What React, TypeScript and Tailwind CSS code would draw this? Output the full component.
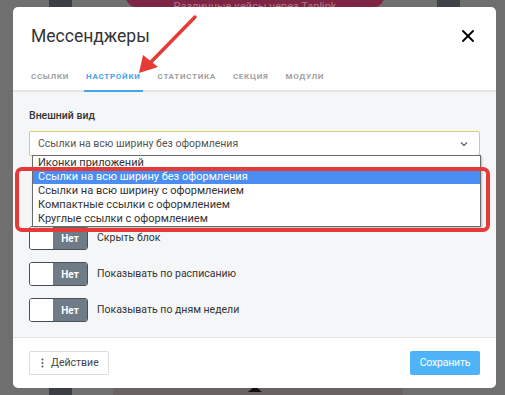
import { X } from 'lucide-react';

const options = [
  'Иконки приложений',
  'Ссылки на всю ширину без оформления',
  'Ссылки на всю ширину с оформлением',
  'Компактные ссылки с оформлением',
  'Круглые ссылки с оформлением',
];

const tabs = ['Ссылки', 'Настройки', 'Статистика', 'Секция', 'Модули'];

function Toggle({ label }: { label: string }) {
  return (
    <div className="flex items-center gap-[9px] h-[24px]">
      <div className="flex w-[59px] h-[24px] border border-[#4a4f55] rounded-[3px] overflow-hidden">
        <div className="w-[23px] bg-white" />
        <div className="flex-1 bg-[#6f7c88] flex items-center justify-center text-white text-[10px] font-bold">Нет</div>
      </div>
      <span className="text-[10.5px] text-[#333]">{label}</span>
    </div>
  );
}

export default function App() {
  return (
    <div className="relative w-[505px] h-[395px] overflow-hidden bg-[#6f6f6f] font-['Roboto','Liberation_Sans',sans-serif]">
      {/* page behind the overlay */}
      <div className="absolute left-[49px] top-0 w-[23px] h-[8px] bg-[#3b3f44]" />
      <div className="absolute left-[125px] top-[-20px] w-[260px] h-[28px] rounded-[14px] bg-[#7e2444] flex items-end justify-center text-[11px] text-[#b07a8c] leading-[16px] overflow-hidden">
        <span className="translate-y-[7px]">Различные кейсы через Taplink</span>
      </div>
      <div className="absolute left-[437px] top-0 w-[23px] h-[8px] bg-[#3f4246]" />
      <div className="absolute left-[113px] top-[388px] w-[290px] h-[7px] bg-[#6a6363]" />
      <div className="absolute left-[49px] top-[388px] w-[23px] h-[7px] bg-[#3b3f44]" />
      <div className="absolute left-[248px] top-[386px] w-0 h-0 border-l-[7px] border-r-[7px] border-b-[6px] border-l-transparent border-r-transparent border-b-[#111]" />

      {/* modal */}
      <div className="relative ml-[13px] mt-[7px] w-[483px] h-[381px] bg-white rounded-[5px] flex flex-col overflow-hidden">
        <div className="h-[85px] border-b-2 border-[#e6e6e6] flex flex-col px-[16px]">
          <div className="flex items-center justify-between h-[56px] pt-[2px]">
            <span className="text-[17.5px] text-[#333] ml-[2px]">Мессенджеры</span>
            <X size={20} strokeWidth={2.2} className="text-black mr-[2px]" />
          </div>
          <div className="flex h-[27px] mt-auto">
            {tabs.map((t, i) => (
              <div
                key={t}
                className={
                  'flex items-center uppercase text-[8px] font-bold tracking-[0.7px] px-[2px] mr-[13px] ' +
                  (i === 1 ? 'text-[#45a4ec] border-b-2 border-[#45a4ec] -mb-[2px]' : 'text-[#a0a0a0] border-b-2 border-transparent -mb-[2px]')
                }
              >
                {t}
              </div>
            ))}
          </div>
        </div>

        <div className="flex-1 bg-[#f5f6f8] px-[16px] pt-[17px]">
          <div className="text-[10.5px] font-medium text-[#333] h-[13px] leading-[13px]">Внешний вид</div>
          <div className="mt-[9px] h-[25px] border border-[#e2c86e] bg-white rounded-[2px] flex items-center justify-between px-[8px]">
            <span className="text-[10.5px] text-[#555]">Ссылки на всю ширину без оформления</span>
            <svg width="8" height="6" viewBox="0 0 8 6" className="mr-[3px]"><path d="M1 1.5 L4 4.5 L7 1.5" fill="none" stroke="#555" strokeWidth="1.1" /></svg>
          </div>
          <div className="mt-[70px] flex flex-col gap-[12px]">
            <Toggle label="Скрыть блок" />
            <Toggle label="Показывать по расписанию" />
            <Toggle label="Показывать по дням недели" />
          </div>
        </div>

        <div className="h-[51px] border-t border-[#e3e3e3] flex items-center justify-between px-[16px]">
          <button className="h-[24px] w-[80px] border border-[#dcdcdc] rounded-[2px] bg-white flex items-center gap-[7px] pl-[11px] text-[10.5px] text-[#444]">
            <svg width="3" height="10" viewBox="0 0 3 10"><circle cx="1.5" cy="1.5" r="1" fill="#555" /><circle cx="1.5" cy="5" r="1" fill="#555" /><circle cx="1.5" cy="8.5" r="1" fill="#555" /></svg>
            Действие
          </button>
          <button className="h-[24px] w-[70px] rounded-[2px] bg-[#4fb4f7] text-white text-[10.5px] flex items-center justify-center tracking-[-0.2px]">Сохранить</button>
        </div>
      </div>

      {/* open native select list */}
      <div className="absolute left-[32px] top-[155px] w-[449px] bg-white border border-[#6b6b6b] shadow-[1px_1px_2px_rgba(0,0,0,0.25)]">
        {options.map((o, i) => (
          <div
            key={o}
            className={'h-[14px] leading-[14px] pl-[5px] text-[11px] ' + (i === 1 ? 'bg-[#4a8ef3] text-white' : 'text-[#333]')}
          >
            {o}
          </div>
        ))}
      </div>

      {/* annotation: red frame */}
      <div className="absolute left-[15px] top-[167px] w-[475px] h-[65px] border-[4px] border-[#e53a35] rounded-[7px]" />

      {/* annotation: red arrow */}
      <svg className="absolute left-0 top-0" width="505" height="395" viewBox="0 0 505 395">
        <line x1="195" y1="17" x2="151" y2="62" stroke="#e53a35" strokeWidth="3.5" strokeLinecap="round" />
        <polygon points="139,73 143,55 158,67" fill="#e53a35" />
      </svg>
    </div>
  );
}
